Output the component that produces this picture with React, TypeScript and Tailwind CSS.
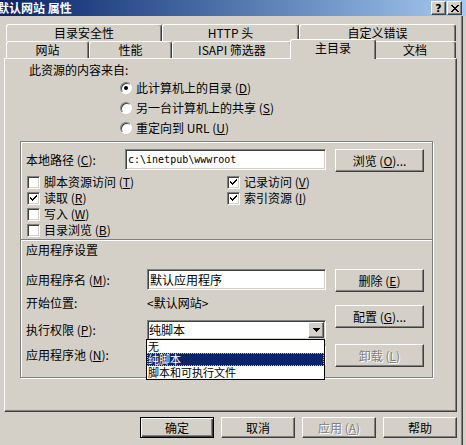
import React from "react";

// IIS "默认网站 属性" dialog, classic Windows 2000 look.

const raised =
  "border border-t-white border-l-white border-r-[#404040] border-b-[#404040] shadow-[inset_-1px_-1px_0_#808080]";
const sunken =
  "border border-t-[#808080] border-l-[#808080] border-r-white border-b-white shadow-[inset_1px_1px_0_#404040,inset_-1px_-1px_0_#d4d0c8]";
const disabledText = "text-[#808080] [text-shadow:1px_1px_0_#fff]";

function K({ label, k, tail = "" }: { label: string; k: string; tail?: string }) {
  return (
    <span className="whitespace-nowrap">
      {label} (<span className="underline underline-offset-[1px]">{k}</span>){tail}
    </span>
  );
}

function Tab({ w, children, active = false }: { w: string; children: React.ReactNode; active?: boolean }) {
  return (
    <div
      className={`${w} flex shrink-0 items-center justify-center rounded-t-[3px] border-t border-l border-r border-t-white border-l-white border-r-[#404040] shadow-[inset_-1px_0_0_#808080] ${
        active ? "relative z-10 -mx-[2px] -mt-[2px] h-[20px] bg-[#d4d0c8] pb-[3px]" : "h-[17px]"
      }`}
    >
      {children}
    </div>
  );
}

function Check({ on = false }: { on?: boolean }) {
  return (
    <span className={`${sunken} flex h-[13px] w-[13px] shrink-0 items-center justify-center bg-white`}>
      {on && (
        <svg width="9" height="9" viewBox="0 0 9 9" shapeRendering="crispEdges">
          <polyline points="1,3.5 3.5,6 8,1.5" fill="none" stroke="#000" strokeWidth="2" />
        </svg>
      )}
    </span>
  );
}

function Radio({ on = false }: { on?: boolean }) {
  return (
    <span className="flex h-[12px] w-[12px] shrink-0 items-center justify-center rounded-full border border-t-[#808080] border-l-[#808080] border-r-white border-b-white bg-white shadow-[inset_1px_1px_0_#404040]">
      {on && <span className="h-[4px] w-[4px] rounded-full bg-black" />}
    </span>
  );
}

function Btn({ w = "w-[89px]", h = "h-[23px]", children, disabled = false, def = false }: {
  w?: string; h?: string; children: React.ReactNode; disabled?: boolean; def?: boolean;
}) {
  const frame = def
    ? "border border-black shadow-[inset_1px_1px_0_#fff,inset_-1px_-1px_0_#404040,inset_-2px_-2px_0_#808080]"
    : raised;
  return (
    <div className={`${w} ${h} ${frame} flex shrink-0 items-center justify-center bg-[#d4d0c8] ${disabled ? disabledText : ""}`}>
      {children}
    </div>
  );
}

function CheckRow({ on, label, k }: { on?: boolean; label: string; k: string }) {
  return (
    <div className="flex h-[16px] items-center gap-[4px]">
      <Check on={on} />
      <K label={label} k={k} />
    </div>
  );
}

export default function App() {
  return (
    <div className="h-[445px] w-[466px] overflow-hidden bg-[#d4d0c8] font-['Noto_Sans_CJK_SC',sans-serif] text-[12px] leading-none text-black">
      {/* Title bar */}
      <div className="flex h-[16px] items-center justify-between bg-gradient-to-r from-[#0a246a] to-[#a6caf0]">
        <span className="-ml-[3px] whitespace-nowrap text-[12px] font-bold text-white">默认网站 属性</span>
        <div className="flex gap-px pr-[4px]">
          <div className={`${raised} flex h-[14px] w-[15px] items-center justify-center bg-[#d4d0c8] font-['DejaVu_Sans',sans-serif] text-[11px] font-bold`}>
            ?
          </div>
          <div className={`${raised} flex h-[14px] w-[15px] items-center justify-center bg-[#d4d0c8]`}>
            <svg width="8" height="7" viewBox="0 0 8 7" shapeRendering="crispEdges">
              <path d="M0.5 0 L7.5 7 M7.5 0 L0.5 7" stroke="#000" strokeWidth="1.8" />
            </svg>
          </div>
        </div>
      </div>

      <div className="flex h-[429px]">
        <div className="flex w-[461px] flex-col">
          {/* Tabs */}
          <div className="ml-[6px] mt-[8px] flex">
            <Tab w="w-[156px]">目录安全性</Tab>
            <Tab w="w-[137px]">HTTP 头</Tab>
            <Tab w="w-[157px]">自定义错误</Tab>
          </div>
          <div className="ml-[6px] flex h-[17px]">
            <Tab w="w-[83px]">网站</Tab>
            <Tab w="w-[83px]">性能</Tab>
            <Tab w="w-[120px]">ISAPI 筛选器</Tab>
            <Tab w="w-[86px]" active>主目录</Tab>
            <Tab w="w-[82px]">文档</Tab>
          </div>

          {/* Page */}
          <div className={`${raised} ml-[4px] flex h-[354px] w-[453px] flex-col pt-[3px]`}>
            <div className="flex h-[16px] items-center pl-[24px]">此资源的内容来自:</div>
            <div className="flex flex-col pl-[115px]">
              <div className="flex h-[20px] items-center gap-[4px]">
                <Radio on />
                <K label="此计算机上的目录" k="D" />
              </div>
              <div className="flex h-[20px] items-center gap-[4px]">
                <Radio />
                <K label="另一台计算机上的共享" k="S" />
              </div>
              <div className="flex h-[20px] items-center gap-[4px]">
                <Radio />
                <K label="重定向到 URL" k="U" />
              </div>
            </div>

            {/* Etched frame */}
            <div className="ml-[15px] mt-[3px] flex h-[237px] w-[413px] flex-col border border-[#808080] shadow-[inset_1px_1px_0_#fff,1px_1px_0_#fff]">
              <div className="mt-[7px] flex h-[23px] pl-[5px]">
                <div className="flex h-[21px] w-[99px] items-center">
                  <K label="本地路径" k="C" tail=":" />
                </div>
                <div className={`${sunken} flex h-[21px] w-[201px] items-center bg-white pl-[2px] font-['DejaVu_Sans_Mono',monospace] text-[10px]`}>
                  c:\inetpub\wwwroot
                </div>
                <div className="ml-[9px]">
                  <Btn><K label="浏览" k="O" tail="..." /></Btn>
                </div>
              </div>

              <div className="mt-[2px] grid grid-cols-[200px_1fr] pl-[6px]">
                <CheckRow label="脚本资源访问" k="T" />
                <CheckRow on label="记录访问" k="V" />
                <CheckRow on label="读取" k="R" />
                <CheckRow on label="索引资源" k="I" />
                <CheckRow label="写入" k="W" />
                <div />
                <CheckRow label="目录浏览" k="B" />
                <div />
              </div>

              <div className="mt-[1px] h-[2px] border-t border-b border-t-[#808080] border-b-white" />

              <div className="flex">
                <div className="flex w-[305px] flex-col pl-[5px]">
                  <div className="mt-[1px] flex h-[16px] items-center">应用程序设置</div>
                  <div className="mt-[11px] flex h-[21px]">
                    <div className="flex w-[121px] items-center">
                      <K label="应用程序名" k="M" tail=":" />
                    </div>
                    <div className={`${sunken} flex h-[21px] w-[179px] items-center bg-white pl-[2px]`}>默认应用程序</div>
                  </div>
                  <div className="mt-[4px] flex h-[18px] items-center">
                    <div className="w-[121px]">开始位置:</div>
                    <div>&lt;默认网站&gt;</div>
                  </div>
                  <div className="mt-[8px] flex h-[20px]">
                    <div className="flex w-[121px] items-center">
                      <K label="执行权限" k="P" tail=":" />
                    </div>
                    <div className={`${sunken} relative flex h-[20px] w-[179px] items-center justify-between bg-white pl-[1px] pr-[1px]`}>
                      <span>纯脚本</span>
                      <div className={`${raised} flex h-[16px] w-[16px] items-center justify-center bg-[#d4d0c8]`}>
                        <svg width="7" height="4" viewBox="0 0 7 4" shapeRendering="crispEdges">
                          <path d="M0 0 H7 L3.5 4 Z" fill="#000" />
                        </svg>
                      </div>
                      {/* Open list */}
                      <div className="absolute left-[-2px] top-[18px] z-20 flex w-[179px] flex-col border border-black bg-white text-[11px] leading-[11px]">
                        <div className="flex h-[13px] items-center pl-[1px]">无</div>
                        <div className="flex h-[13px] items-center bg-[#0a246a] pl-[1px] text-white outline-1 -outline-offset-1 outline-dotted outline-[#c8b870]">纯脚本</div>
                        <div className="flex h-[13px] items-center pl-[1px]">脚本和可执行文件</div>
                      </div>
                    </div>
                  </div>
                  <div className="mt-[5px] flex h-[20px]">
                    <div className="flex w-[121px] items-center">
                      <K label="应用程序池" k="N" tail=":" />
                    </div>
                    <div className={`${sunken} h-[20px] w-[179px] bg-white`} />
                  </div>
                </div>

                <div className="ml-[9px] flex flex-col">
                  <div className="mt-[28px]">
                    <Btn><K label="删除" k="E" /></Btn>
                  </div>
                  <div className="mt-[13px]">
                    <Btn><K label="配置" k="G" tail="..." /></Btn>
                  </div>
                  <div className="mt-[16px]">
                    <Btn disabled><K label="卸载" k="L" /></Btn>
                  </div>
                </div>
              </div>
            </div>
          </div>

          {/* Dialog buttons */}
          <div className="mt-[5px] flex justify-end gap-[7px] pr-[4px]">
            <Btn w="w-[74px]" h="h-[21px]" def>确定</Btn>
            <Btn w="w-[74px]" h="h-[21px]">取消</Btn>
            <Btn w="w-[74px]" h="h-[21px]" disabled><K label="应用" k="A" /></Btn>
            <Btn w="w-[74px]" h="h-[21px]">帮助</Btn>
          </div>
        </div>
        <div className="w-px bg-[#808080]" />
        <div className="w-px bg-[#404040]" />
        <div className="flex-1 bg-[#d4d0c8]" />
      </div>
    </div>
  );
}
